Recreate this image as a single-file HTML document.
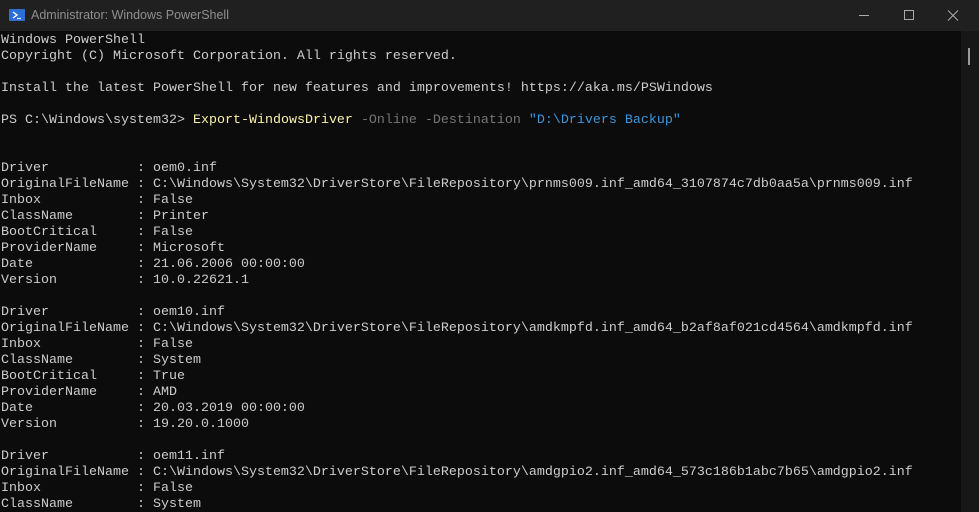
<!DOCTYPE html>
<html><head><meta charset="utf-8"><style>
html,body{margin:0;padding:0;width:979px;height:512px;overflow:hidden;background:#0c0c0c;position:relative}
.title{position:absolute;left:0;top:0;width:979px;height:31px;background:#202020;color:#8f8f8f;font-family:"Liberation Sans",sans-serif;font-size:12.5px}
.title .t{position:absolute;left:31px;top:8px}
.ico{position:absolute;left:9px;top:9px;width:16px;height:12px;background:#2b6fd6;border-radius:1px}
.view{position:absolute;left:0;top:31px;width:961px;height:481px;overflow:hidden}
.term{position:absolute;left:1px;top:2px;font-family:"Liberation Mono",monospace;font-size:13.33px;line-height:16px;color:#cccccc;white-space:pre;margin:0}
.sb{position:absolute;left:961px;top:31px;width:18px;height:481px;background:#171717}
.thumb{position:absolute;left:968px;top:48px;width:2px;height:17px;background:#9a9a9a}
.y{color:#f9f1a5}.g{color:#767676}.b{color:#3a96dd}
</style></head><body>
<div class="title"><div class="ico"><svg width="16" height="12" viewBox="0 0 16 12"><path d="M4 3 L8 6 L4 9" stroke="#fff" stroke-width="1.4" fill="none"/><path d="M8 9.5 H12" stroke="#fff" stroke-width="1.2"/></svg></div><span class="t">Administrator: Windows PowerShell</span>
<svg style="position:absolute;left:858px;top:10px" width="110" height="12"><path d="M1 5.5 H11" stroke="#aaa" stroke-width="1"/><rect x="46.5" y="0.5" width="9" height="9" stroke="#aaa" fill="none"/><path d="M90 0.5 L100 10.5 M100 0.5 L90 10.5" stroke="#aaa" stroke-width="1"/></svg></div>
<div class="view"><pre class="term">Windows PowerShell
Copyright (C) Microsoft Corporation. All rights reserved.

Install the latest PowerShell for new features and improvements! https://aka.ms/PSWindows

PS C:\Windows\system32&gt; <span class="y">Export-WindowsDriver</span> <span class="g">-Online -Destination</span> <span class="b">"D:\Drivers Backup"</span>


Driver           : oem0.inf
OriginalFileName : C:\Windows\System32\DriverStore\FileRepository\prnms009.inf_amd64_3107874c7db0aa5a\prnms009.inf
Inbox            : False
ClassName        : Printer
BootCritical     : False
ProviderName     : Microsoft
Date             : 21.06.2006 00:00:00
Version          : 10.0.22621.1

Driver           : oem10.inf
OriginalFileName : C:\Windows\System32\DriverStore\FileRepository\amdkmpfd.inf_amd64_b2af8af021cd4564\amdkmpfd.inf
Inbox            : False
ClassName        : System
BootCritical     : True
ProviderName     : AMD
Date             : 20.03.2019 00:00:00
Version          : 19.20.0.1000

Driver           : oem11.inf
OriginalFileName : C:\Windows\System32\DriverStore\FileRepository\amdgpio2.inf_amd64_573c186b1abc7b65\amdgpio2.inf
Inbox            : False
ClassName        : System
BootCritical     : False</pre></div>
<div class="sb"></div><div class="thumb"></div>
</body></html>
